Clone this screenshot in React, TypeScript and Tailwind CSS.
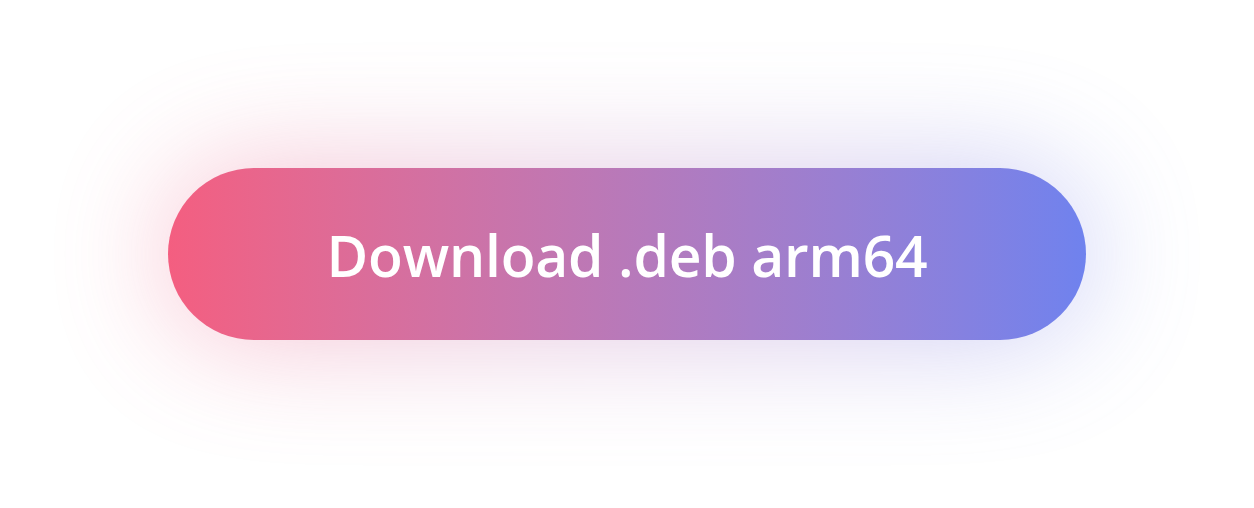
export default function App() {
  return (
    <main className="w-full h-[508px] bg-white flex items-center justify-center">
      <div className="relative">
        {/* glow */}
        <div className="absolute inset-0 rounded-full bg-gradient-to-r from-[#f45e80] to-[#6e82ee] blur-[60px] opacity-40" />
        <button className="relative w-[918px] h-[172px] rounded-full bg-gradient-to-r from-[#f45e80] to-[#6f82ee] text-white text-[57px] font-semibold tracking-[-0.2px] flex items-center justify-center pt-[4px] font-['Open_Sans',sans-serif]">
          Download .deb arm64
        </button>
      </div>
    </main>
  );
}
